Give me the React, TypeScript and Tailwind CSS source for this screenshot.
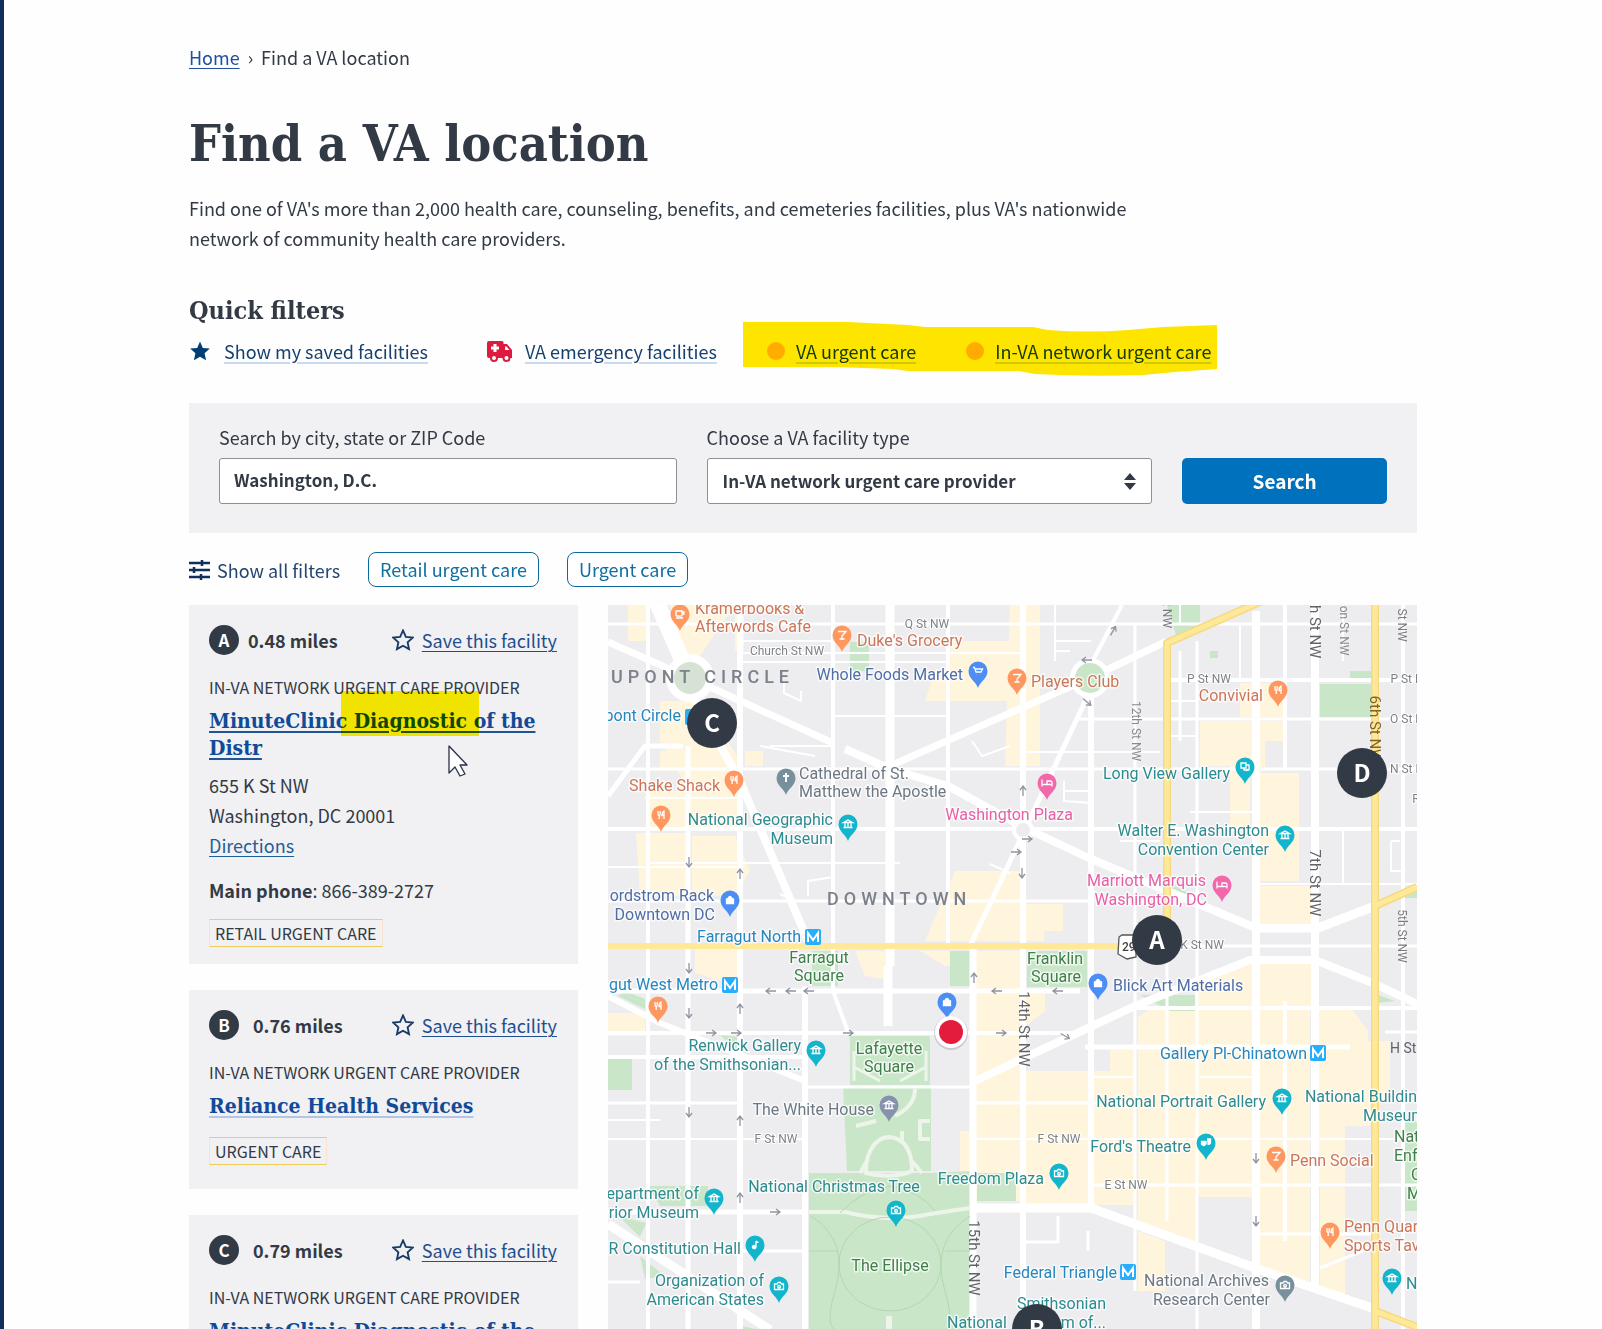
import React from "react";

const SANS = "font-['Noto_Sans_CJK_JP','Noto_Sans',sans-serif]";
const SLAB = "font-['DejaVu_Serif_Condensed','DejaVu_Serif',serif]";

type Facility = {
  letter: string;
  miles: string;
  name: string;
  address?: string[];
  phone?: string;
  tag: string;
  underline: string;
};

const facilities: Facility[] = [
  {
    letter: "A",
    miles: "0.48 miles",
    name: "MinuteClinic Diagnostic of the Distr",
    address: ["655 K St NW", "Washington, DC 20001"],
    phone: "866-389-2727",
    tag: "RETAIL URGENT CARE",
    underline: "decoration-[#205493]",
  },
  {
    letter: "B",
    miles: "0.76 miles",
    name: "Reliance Health Services",
    tag: "URGENT CARE",
    underline: "decoration-[#b5c7e0]",
  },
  {
    letter: "C",
    miles: "0.79 miles",
    name: "MinuteClinic Diagnostic of the Distr",
    address: ["1275 Pennsylvania Ave NW", "Washington, DC 20004"],
    phone: "866-389-2727",
    tag: "RETAIL URGENT CARE",
    underline: "decoration-[#205493]",
  },
];

const STAR = "M12 1.6l3.1 7 7.6.8-5.7 5.1 1.6 7.5L12 18.2 5.4 22 7 14.5 1.3 9.4l7.6-.8z";

function FacilityCard({ f }: { f: Facility }) {
  return (
    <article className="relative bg-[#f1f0f3] px-5 pt-5 pb-[17px]">
      <div className="flex items-center">
        <span className="flex size-[30px] items-center justify-center rounded-full bg-[#323a45] text-[17px] leading-[30px] font-bold text-white">
          {f.letter}
        </span>
        <span className={(f.letter === "A" ? "ml-[9px]" : "ml-[14px]") + " text-[18px] leading-[30px] font-bold"}>
          {f.miles}
        </span>
        <button type="button" className="mr-px ml-auto flex items-center gap-2 text-[#1f4f8f]">
          <svg viewBox="0 0 24 24" className="size-[22px]" fill="none" stroke="#163b66" strokeWidth="2" aria-hidden="true">
            <path d={STAR} />
          </svg>
          <span className="text-[18px] leading-[30px] underline decoration-1 underline-offset-3">Save this facility</span>
        </button>
      </div>
      <p className="mt-5 text-[16px] leading-6">IN-VA NETWORK URGENT CARE PROVIDER</p>
      <h3 className={SLAB + " mt-2 text-[21px] leading-[27px] font-bold"}>
        <a href="#facility" className={"text-[#0f4b97] underline decoration-2 underline-offset-3 " + f.underline}>
          {f.name}
        </a>
      </h3>
      {f.address && (
        <div className="mt-[9px] text-[18px] leading-[30px]">
          {f.address.map((line) => (
            <p key={line}>{line}</p>
          ))}
          <a href="#directions" className="text-[#1f5f99] underline decoration-1 underline-offset-3">
            Directions
          </a>
        </div>
      )}
      {f.phone && (
        <p className="mt-[15px] text-[18px] leading-[30px]">
          <b>Main phone</b>: {f.phone}
        </p>
      )}
      <span
        className={
          (f.phone ? "mt-[14px]" : "mt-[18px] mb-[7px]") +
          " inline-block border border-x-[#f6e3cf] border-y-[#efcf5a] px-[5px] text-[16px] leading-[26px]"
        }
      >
        {f.tag}
      </span>
      {f.letter === "A" && (
        <>
          <div className="absolute top-[86px] left-[152px] h-[45px] w-[138px] bg-[#fff200] mix-blend-multiply" />
          <svg viewBox="0 0 20 32" className="absolute top-[140px] left-[259px] h-8 w-5" aria-hidden="true">
            <path d="M1 1v27l6-6 5 9 5-2-5-9h7z" fill="#fff" stroke="#2b2f4a" strokeWidth="1.3" strokeLinejoin="round" />
          </svg>
        </>
      )}
    </article>
  );
}

/* ---------- Map ---------- */

const roads: [string, number][] = [
  ["M648 604V1329", 4],
  ["M688 745V1329", 5],
  ["M740 604V1329", 6],
  ["M833 604V990L848 1031", 4],
  ["M890 604V965M888 965V1025", 9],
  ["M948 604V945", 4],
  ["M805 985V1329", 6],
  ["M973 945V1329", 7],
  ["M1023 604V1329", 6],
  ["M1091 690V1205", 6],
  ["M1135 623V1290", 3],
  ["M1167 920V1220", 3],
  ["M1180 650V740M1197 640V1329", 3],
  ["M1256 610V1329", 8],
  ["M1285 604V768M1285 1000V1240", 4],
  ["M1315 604V1290", 8],
  ["M1343 604V660M1343 830V883", 2],
  ["M1403 604V1329", 4],
  ["M608 623H1417", 3],
  ["M740 652H1023M740 640H833M740 661H948", 2],
  ["M833 715H950M1167 700H1197", 2],
  ["M608 768H1417", 3],
  ["M645 797H740M833 745H770", 2],
  ["M608 828H1417", 4],
  ["M648 862H900M608 866H740M990 863L1010 872", 2],
  ["M608 900H1091", 3],
  ["M1115 945H1417", 3],
  ["M1167 679H1417", 4],
  ["M1075 718H1417", 3],
  ["M1023 751H1160M1170 735H1197M1190 811H1256M1256 883H1417", 2],
  ["M608 990H1080", 5],
  ["M608 1032H1080", 4],
  ["M608 1056H805", 4],
  ["M805 1086H975", 3],
  ["M608 1102H740M975 1102H1135", 3],
  ["M608 1119H660M608 1138H805M975 1138H1417", 2],
  ["M608 1211H805", 5],
  ["M688 1250H805M608 1281H640", 3],
  ["M1135 1007H1417", 4],
  ["M1385 1031H1417", 3],
  ["M1085 1046H1350", 5],
  ["M1091 1076H1135M1200 1076H1256", 2],
  ["M1091 1184H1417", 3],
  ["M1256 1233H1375M1320 1267L1375 1245", 3],
  ["M973 1207H1091L1258 1268L1375 1308", 9],
  ["M652 590L690 677", 16],
  ["M690 690L740 780L808 940", 8],
  ["M608 641L690 677L833 742", 7],
  ["M845 748L890 768L948 785L1023 826L1091 858L1256 927", 8],
  ["M1256 927H1318L1375 905", 9],
  ["M890 765L1010 712L1090 677L1167 640", 7],
  ["M1090 690L1022 835L970 945", 5],
  ["M1090 665L1122 604", 4],
  ["M608 795L645 745H683", 5],
  ["M975 1080L1135 1005L1250 959H1315L1375 983L1417 1003", 8],
  ["M608 1223L770 1329", 9],
  ["M608 995L660 1022L805 1080", 6],
  ["M1023 1241H1058V1215M1088 1230V1250", 3],
  ["M784 680V692L801 700V690M760 745L815 755M780 893L795 900M808 895V880L833 876", 2],
  ["M972 740L982 755L1010 745", 2],
  ["M1055 640H1091M1055 604V660M1055 650H1070M1064 790H1091M1064 780V800L1091 802", 2],
  ["M1160 840H1120M1391 840H1400M1391 840V870H1403M1180 604V623M1240 625V679", 2],
];

const beige = [
  "M670 604H735L700 655H680z",
  "M735 613H744V650H735z",
  "M628 604H648V640H628z",
  "M660 700H700L738 756V830H648V790H690L660 740z",
  "M660 750H690V770H660z",
  "M636 832H688V895H640z",
  "M692 835H735L750 870L735 895H692z",
  "M745 750H763V765H745z",
  "M945 640H1022V700H925L935 670H948z",
  "M1010 604H1040V765H1005z",
  "M955 870H1020V940H925z",
  "M1026 903H1063V930H1026zM1026 925H1044V940H1026z",
  "M1200 720H1285V740H1265V770H1250V828H1230V765H1200z",
  "M1240 682H1285V716H1240z",
  "M1260 772H1299V880H1260zM1258 885H1312V922H1258z",
  "M695 945H738V985L695 972z",
  "M855 950H885V978L865 975z",
  "M920 950H970V965H945z",
  "M976 950H1022V1200H960V1130H973z",
  "M608 1012H645V1035H608z",
  "M1026 1070H1135V1204H1026z",
  "M1026 990H1045V1010L1026 1025z",
  "M1110 1048H1136V1075H1110z",
  "M1138 1016L1150 1008H1310V1195H1138z",
  "M1195 985L1250 962H1313V1005H1195z",
  "M1318 1008H1352L1368 1030V1040H1390V1100H1371V1125H1345V1183H1318z",
  "M1138 1186H1197V1250L1138 1222z",
  "M1200 1186H1310V1290L1256 1265V1196H1200z",
  "M1320 1186H1345V1300L1320 1290z",
  "M1138 1230L1165 1240V1290H1138z",
];

const green = [
  "M850 641H869V670H850z",
  "M1167 604H1200V625L1176 634z",
  "M1320 683H1371V716H1320z",
  "M1350 670H1371V677H1350z",
  "M812 950H838V985H812z",
  "M950 950H971V985H950z",
  "M1027 950H1087V986H1027z",
  "M625 990L645 998V1008L618 995z",
  "M608 1058H632V1089H608z",
  "M720 1034L738 1036V1050z",
  "M850 1035H930V1084H850z",
  "M843 1086H931V1170H847z",
  "M809 1172H932L970 1170V1329H809z",
  "M977 1172H1016V1200H977z",
  "M648 1185H708V1205H660z",
  "M618 1215L646 1222L640 1236z",
  "M640 1255L665 1275L645 1278z",
  "M1140 994H1195V1010H1170z",
  "M1378 994L1395 1000L1378 1002z",
  "M1405 1120H1417V1210H1405z",
  "M1165 880L1195 895L1170 890z",
  "M1210 650h8v7h-8z",
  "M1403 890L1417 884V897H1403z",
  "M742 1325L760 1329H742z",
];

const C = {
  orange: "#ff9860",
  blue: "#4c8df6",
  teal: "#12b5cb",
  pink: "#f268ab",
  slate: "#78909c",
};

const glyph: Record<string, React.ReactNode> = {
  fork: <path d="M-3-4v3q0 1.5 1.2 1.5V4M-.8-4v3q0 1.5-1.2 1.5M3 4V-4Q1-3 1 .5H3" />,
  cup: <path d="M-4-3H2V1q0 1-1 1h-4q-1 0-1-1zM2-2h2V0H2M-4 4H3" />,
  drink: <path d="M-4-3.5H4L0 1V4M-2.500 4H2.500" />,
  cart: <path d="M-5-3.500h1.500L-2 1H3L4.500-2H-2.500M-1.500 3.500h.1M2.500 3.500h.1" />,
  bag: <path d="M-3.500-1H3.500V3.500h-7zM-1.800-1v-1Q0-5 1.800-2v1" fill="#fff" />,
  bed: <path d="M-5-3.500V3.500M-5 1.500H5M5 3.500V-.500Q5-2 3-2H0V1.500M-2.500-.800h.1" />,
  museum: <path d="M-4.500-1.500L0-4L4.500-1.500zM-3-1V3M0-1V3M3-1V3M-4.500 3.500h9" />,
  camera: <path d="M-4.500-2H-2L-1-3.500H1.500L2.500-2H4.500V3.500h-9zM0-.6a1.300 1.300 0 1 0 .1 0" />,
  note: <path d="M1-4V2M1-4L3.500-2.500M1 2a1.800 1.600 0 1 1-.1-.5" fill="#fff" />,
  church: <path d="M0-5V4M-3-2H3" strokeWidth="2" />,
  masks: <path d="M-4.500-1.500H0V1q-2 3-4.500 0zM1-4H4.500V0Q3 2 1.500 1" fill="#fff" />,
  art: <path d="M-4-4H1V1H-4zM1-2H4V3H-1V1M1 4L3 2" />,
};

const pins: [number, number, string, string][] = [
  [680, 614, C.orange, "cup"],
  [842, 635, C.orange, "drink"],
  [978, 671, C.blue, "cart"],
  [1017, 678, C.orange, "drink"],
  [786, 778, C.slate, "church"],
  [734, 780, C.orange, "fork"],
  [661, 815, C.orange, "fork"],
  [848, 824, C.teal, "museum"],
  [730, 900, C.blue, "bag"],
  [1047, 783, C.pink, "bed"],
  [1245, 767, C.teal, "art"],
  [1278, 690, C.orange, "fork"],
  [1285, 835, C.teal, "museum"],
  [1222, 885, C.pink, "bed"],
  [658, 1006, C.orange, "fork"],
  [816, 1050, C.teal, "museum"],
  [947, 1002, C.blue, "bag"],
  [889, 1105, "#8591ad", "museum"],
  [714, 1198, C.teal, "museum"],
  [896, 1210, C.teal, "camera"],
  [755, 1245, C.teal, "note"],
  [779, 1286, C.teal, "camera"],
  [1098, 983, C.blue, "bag"],
  [1282, 1098, C.teal, "museum"],
  [1206, 1143, C.teal, "masks"],
  [1059, 1173, C.teal, "camera"],
  [1276, 1156, C.orange, "drink"],
  [1330, 1232, C.orange, "fork"],
  [1392, 1278, C.teal, "museum"],
  [1285, 1285, C.slate, "camera"],
];

const metros: [number, number][] = [
  [813, 936],
  [730, 984],
  [1318, 1052],
  [1128, 1271],
];

const T = { food: "#cc7659", shop: "#4f6ea8", museum: "#2e8b90", grey: "#6d7885", pink: "#e75fa5", park: "#3f7f49", metro: "#2487c0" };

const labels: [string, number, number, string, "start" | "middle" | "end"][] = [
  ["Kramerbooks &", 695, 613, T.food, "start"],
  ["Afterwords Cafe", 695, 631, T.food, "start"],
  ["Duke's Grocery", 857, 645, T.food, "start"],
  ["Whole Foods Market", 963, 679, T.shop, "end"],
  ["Players Club", 1031, 686, T.food, "start"],
  ["Convivial", 1263, 700, T.food, "end"],
  ["pont Circle", 681, 720, T.metro, "end"],
  ["Shake Shack", 720, 790, T.food, "end"],
  ["Cathedral of St.", 799, 778, T.grey, "start"],
  ["Matthew the Apostle", 799, 796, T.grey, "start"],
  ["National Geographic", 833, 824, T.museum, "end"],
  ["Museum", 833, 843, T.museum, "end"],
  ["Washington Plaza", 1073, 819, T.pink, "end"],
  ["Long View Gallery", 1230, 778, T.museum, "end"],
  ["Walter E. Washington", 1269, 835, T.museum, "end"],
  ["Convention Center", 1269, 854, T.museum, "end"],
  ["Marriott Marquis", 1206, 885, T.pink, "end"],
  ["Washington, DC", 1207, 904, T.pink, "end"],
  ["ordstrom Rack", 714, 900, T.shop, "end"],
  ["Downtown DC", 715, 919, T.shop, "end"],
  ["Farragut North", 801, 941, T.metro, "end"],
  ["Farragut", 819, 962, T.park, "middle"],
  ["Square", 819, 980, T.park, "middle"],
  ["gut West Metro", 718, 989, T.metro, "end"],
  ["Franklin", 1055, 963, T.park, "middle"],
  ["Square", 1056, 981, T.park, "middle"],
  ["Blick Art Materials", 1113, 990, T.shop, "start"],
  ["Renwick Gallery", 801, 1050, T.museum, "end"],
  ["of the Smithsonian...", 801, 1069, T.museum, "end"],
  ["Lafayette", 889, 1053, T.park, "middle"],
  ["Square", 889, 1071, T.park, "middle"],
  ["The White House", 874, 1114, T.grey, "end"],
  ["Gallery Pl-Chinatown", 1307, 1058, T.metro, "end"],
  ["National Portrait Gallery", 1266, 1106, T.museum, "end"],
  ["National Buildin", 1417, 1101, T.museum, "end"],
  ["Museum", 1363, 1120, T.museum, "start"],
  ["Ford's Theatre", 1191, 1151, T.museum, "end"],
  ["Penn Social", 1290, 1165, T.food, "start"],
  ["Nat", 1394, 1141, T.park, "start"],
  ["Enfo", 1394, 1160, T.park, "start"],
  ["Of", 1411, 1179, T.park, "start"],
  ["Me", 1407, 1198, T.park, "start"],
  ["Freedom Plaza", 1044, 1183, T.museum, "end"],
  ["National Christmas Tree", 834, 1191, T.museum, "middle"],
  ["epartment of", 699, 1198, T.museum, "end"],
  ["rior Museum", 699, 1217, T.museum, "end"],
  ["R Constitution Hall", 741, 1253, T.museum, "end"],
  ["The Ellipse", 890, 1270, T.park, "middle"],
  ["Organization of", 764, 1285, T.museum, "end"],
  ["American States", 764, 1304, T.museum, "end"],
  ["Federal Triangle", 1117, 1277, T.metro, "end"],
  ["National Archives", 1269, 1285, T.grey, "end"],
  ["Research Center", 1270, 1304, T.grey, "end"],
  ["Smithsonian", 1106, 1308, T.museum, "end"],
  ["National", 947, 1327, T.museum, "start"],
  ["m of...", 1106, 1327, T.museum, "end"],
  ["Penn Quarter", 1344, 1231, T.food, "start"],
  ["Sports Tavern", 1344, 1250, T.food, "start"],
  ["N", 1406, 1288, T.museum, "start"],
];

const streets: [string, number, number][] = [
  ["Q St NW", 927, 627],
  ["Church St NW", 787, 654],
  ["P St NW", 1209, 682],
  ["P St N", 1407, 682],
  ["O St N", 1407, 722],
  ["N St N", 1407, 772],
  ["R", 1416, 802],
  ["K St NW", 1202, 948],
  ["F St NW", 776, 1142],
  ["F St NW", 1059, 1142],
  ["E St NW", 1126, 1188],
];

const vstreets: [string, number, number, number, string][] = [
  ["t NW", 1163, 614, 12, "#777b80"],
  ["12th St NW", 1132, 730, 12, "#85898e"],
  ["8th St NW", 1310, 624, 15, "#5f6368"],
  ["7th St NW", 1310, 882, 15, "#5f6368"],
  ["rion St NW", 1340, 626, 12, "#85898e"],
  ["6th St NW", 1370, 728, 15, "#7a6427"],
  ["5th St NW", 1398, 614, 12, "#777b80"],
  ["5th St NW", 1398, 935, 12, "#777b80"],
  ["14th St NW", 1019, 1028, 15, "#5f6368"],
  ["15th St NW", 969, 1257, 15, "#5f6368"],
];

const arrows: [number, number, number][] = [
  [689, 861, 90], [740, 873, -90], [689, 967, 90], [689, 1012, 90], [740, 1008, -90],
  [771, 990, 180], [791, 990, 180], [809, 990, 180], [974, 977, -90], [997, 990, 180],
  [711, 1032, 0], [736, 1032, 0], [848, 1032, 0], [1001, 1032, 0], [689, 1111, 90],
  [740, 1120, -90], [740, 1197, -90], [775, 1211, 0], [1256, 1157, 90], [1256, 1220, 90],
  [1058, 990, 180], [1023, 790, -90], [1022, 872, 90], [1016, 851, 0], [1113, 630, -60],
  [1087, 659, 180], [1087, 701, 40], [1027, 838, 0], [1065, 1035, 30],
];

const markers: [string, number, number][] = [
  ["C", 712, 722],
  ["D", 1362, 772],
  ["A", 1157, 939],
  ["B", 1037, 1328],
];

function FacilityMap() {
  return (
    <svg
      viewBox="608 604 809 725"
      preserveAspectRatio="xMinYMin slice"
      className="block h-full w-full font-[Roboto,sans-serif]"
      role="img"
      aria-label="Map of facilities near Washington, D.C."
    >
      <rect x="608" y="604" width="1200" height="1200" fill="#ededf0" />
      <g fill="#fff4dc">{beige.map((d) => <path key={d} d={d} />)}</g>
      <g fill="#c9e7c8">{green.map((d) => <path key={d} d={d} />)}</g>
      <g stroke="#fff" fill="none" strokeLinejoin="round">
        {roads.map(([d, w]) => <path key={d} d={d} strokeWidth={w} />)}
      </g>
      <g fill="none" stroke="#edf5ea" strokeWidth="4" strokeLinejoin="round">
        <path d="M856 1125L876 1120M890 1136C872 1136 865 1158 866 1172C880 1176 900 1176 912 1170C912 1150 905 1138 890 1136zM860 1172L868 1158M922 1172L910 1158M915 1088Q915 1105 895 1115M930 1120H920V1138H930M902 1130V1140" />
        <path d="M854 1050V1080M926 1050V1080M854 1066L880 1080M926 1066L900 1080" strokeWidth="3" />
        <path d="M809 1211H845Q890 1222 930 1213L970 1207" />
        <path d="M889 1315V1329" strokeWidth="6" />
      </g>
      <g fill="none" stroke="#b3d6b0" strokeWidth="1">
        <ellipse cx="890" cy="1263" rx="51" ry="47" />
        <path d="M811 1215Q850 1240 835 1290T850 1329M970 1215Q930 1240 945 1290T930 1329M840 1212Q860 1190 890 1185Q920 1190 935 1210M809 1250H838M945 1250H970" />
      </g>
      <circle cx="690" cy="677" r="24" fill="#fff" />
      <circle cx="690" cy="677" r="16" fill="#d6e2d3" />
      <circle cx="1090" cy="677" r="20" fill="#fff" />
      <circle cx="1090" cy="677" r="15" fill="#c9e7c8" />
      <circle cx="1023" cy="829" r="9" fill="#ededf0" stroke="#fff" strokeWidth="4" />
      <g fill="none" stroke="#f6d980" strokeLinejoin="round">
        <path d="M1167 920V642L1262 600M1375 600V1333M1375 905L1417 886M1375 1310L1417 1326" strokeWidth="8" />
      </g>
      <g fill="none" stroke="#ffe999" strokeLinejoin="round">
        <path d="M1167 920V642L1262 600M1375 600V1333M1375 905L1417 886M1375 1310L1417 1326" strokeWidth="5" />
        <path d="M608 945H1120" strokeWidth="6" />
      </g>
      <g fill="none" stroke="#9094a0" strokeWidth="1.300">
        {arrows.map(([x, y, r]) => (
          <path key={x + "-" + y} d="M-5 0H5M1-3L5 0L1 3" transform={`translate(${x} ${y}) rotate(${r})`} />
        ))}
      </g>

      <g fontSize="12" fill="#7d8187" textAnchor="middle" stroke="#fff" strokeWidth="2" paintOrder="stroke">
        {streets.map(([t, x, y]) => <text key={t + x + y} x={x} y={y}>{t}</text>)}
      </g>
      <text x="1390" y="1052" fontSize="14" fill="#5f6368">H St</text>
      <g textAnchor="middle">
        {vstreets.map(([t, x, y, s, c]) => (
          <text key={t + x + y} fontSize={s} fill={c} transform={`translate(${x} ${y}) rotate(90)`}>{t}</text>
        ))}
      </g>
      <g fontSize="18" fontWeight="500" fill="#7c808b" className="tracking-[5px]">
        <text x="611" y="682">UPONT CIRCLE</text>
        <text x="827" y="904">DOWNTOWN</text>
      </g>

      <g fontSize="16" stroke="#fff" strokeOpacity="0.7" strokeWidth="3" paintOrder="stroke" strokeLinejoin="round">
        {labels.map(([t, x, y, c, a]) => (
          <text key={t + x + y} x={x} y={y} fill={c} textAnchor={a}>{t}</text>
        ))}
      </g>

      <rect x="685" y="708" width="16" height="16" rx="2" fill="#27aefc" />
      {metros.map(([x, y]) => (
        <g key={x}>
          <rect x={x - 8} y={y - 8} width="16" height="16" rx="2" fill="#27aefc" />
          <path d={`M${x - 5} ${y + 5}V${y - 4}L${x} ${y + 3}L${x + 5} ${y - 4}V${y + 5}`} fill="none" stroke="#fff" strokeWidth="2" />
        </g>
      ))}
      {pins.map(([x, y, c, g]) => (
        <g key={x + "-" + y} transform={`translate(${x} ${y})`}>
          <path d="M0 16C-1.500 10-9.500 7-9.500-1A9.500 9.500 0 1 1 9.500-1C9.500 7 1.500 10 0 16z" fill={c} />
          <g transform="translate(0 -1)" fill="none" stroke="#fff" strokeWidth="1.300">{glyph[g]}</g>
        </g>
      ))}

      <path d="M1119 936L1122 934H1136V956L1127 958L1118 953z" fill="#fff" stroke="#555" strokeWidth="1.300" />
      <text x="1122" y="950" fontSize="12" fontWeight="500" fill="#444">29</text>

      <circle cx="951" cy="1032" r="17" fill="#8a8a94" opacity="0.35" />
      <circle cx="951" cy="1031" r="16" fill="#fff" />
      <circle cx="951" cy="1031" r="12" fill="#e31c3d" />

      {markers.map(([l, x, y]) => (
        <g key={l}>
          <circle cx={x} cy={y} r="25" fill="#323a45" />
          <text x={x} y={y + 9} textAnchor="middle" fontSize="24" fontWeight="700" fill="#fff" className={SANS}>
            {l}
          </text>
        </g>
      ))}
    </svg>
  );
}

const chip = "h-[35px] rounded-lg border border-[#0e6a9c] bg-white px-[11px] text-[18px] leading-[33px] text-[#0e6fa0]";
const quickLink = "underline decoration-2 underline-offset-3";

export default function App() {
  return (
    <div className={SANS + " h-screen overflow-hidden border-l-4 border-[#112f5c] bg-[#fefefe] text-[#323a45]"}>
      <main className="mx-auto flex h-full max-w-[1228px] flex-col">
        <nav aria-label="Breadcrumb" className="mt-[42px] flex gap-2 text-[18px] leading-[30px]">
          <a href="#home" className="text-[#1f4f9f] underline decoration-1 underline-offset-3">Home</a>
          <span aria-hidden="true">›</span>
          <span>Find a VA location</span>
        </nav>

        <h1 className={SLAB + " mt-10 text-[50px] leading-[64px] font-bold"}>Find a VA location</h1>
        <p className="mt-[17px] max-w-[960px] text-[18px] leading-[30px]">
          Find one of VA's more than 2,000 health care, counseling, benefits, and cemeteries facilities, plus VA's
          nationwide network of community health care providers.
        </p>

        <h2 className={SLAB + " mt-[42px] text-[25px] leading-[32px] font-bold"}>Quick filters</h2>
        <div className="relative mt-[9px] flex items-center text-[18px] leading-[30px] text-[#16406f]">
          <a href="#saved" className="flex items-center gap-[13px]">
            <svg viewBox="0 0 24 24" className="size-[22px]" fill="#003e73" aria-hidden="true">
              <path d={STAR} />
            </svg>
            <span className={quickLink + " decoration-[#c9d9ef]"}>Show my saved facilities</span>
          </a>
          <a href="#emergency" className="ml-[59px] flex items-center gap-3">
            <svg viewBox="0 0 26 21" className="h-[21px] w-[26px]" aria-hidden="true">
              <path d="M2 0H15Q16.500 0 16.500 1.500V3H20L25 9V17H2Q0 17 0 15V2Q0 0 2 0z" fill="#dc1b3f" />
              <path d="M8 3V11M4 7H12" stroke="#fff" strokeWidth="3" />
              <path d="M18 5.500H19.500L22.500 9H18z" fill="#fff" />
              <circle cx="7" cy="17" r="3" fill="#fff" stroke="#dc1b3f" strokeWidth="2" />
              <circle cx="19.500" cy="17" r="3" fill="#fff" stroke="#dc1b3f" strokeWidth="2" />
            </svg>
            <span className={quickLink + " decoration-[#c9d9ef]"}>VA emergency facilities</span>
          </a>
          <a href="#urgent" className="ml-[50px] flex items-center gap-[11px]">
            <span className="size-[18px] rounded-full bg-[#ffbe2e]" />
            <span className={quickLink + " decoration-[#d0e0ef]"}>VA urgent care</span>
          </a>
          <a href="#network" className="ml-[50px] flex items-center gap-[11px]">
            <span className="size-[18px] rounded-full bg-[#ffbe2e]" />
            <span className={quickLink + " decoration-[#d0e0ef]"}>In-VA network urgent care</span>
          </a>
          <svg viewBox="0 0 474 54" className="absolute top-[-14px] left-[554px] h-[54px] w-[474px] mix-blend-multiply" aria-hidden="true">
            <path d="M0 0H105L165 3L182 5H290L305 8Q345 11 385 8L420 5L474 3V47L432 50L400 53Q345 55 292 52L275 49H165L150 47L90 45H0z" fill="#ffe600" />
          </svg>
        </div>

        <form
          className="mt-[37px] grid grid-cols-[458fr_446fr_205fr] items-end gap-x-[30px] bg-[#f1f0f3] px-[30px] pt-[19px] pb-[29px]"
          onSubmit={(e) => e.preventDefault()}
        >
          <div>
            <label htmlFor="place" className="block text-[18px] leading-[30px]">Search by city, state or ZIP Code</label>
            <input
              id="place"
              defaultValue="Washington, D.C."
              className="mt-[6px] block h-[46px] w-full rounded-[3px] border border-[#8d9099] bg-white px-[14px] pb-[3px] text-[17px] leading-[30px] font-bold"
            />
          </div>
          <div>
            <label htmlFor="kind" className="block text-[18px] leading-[30px]">Choose a VA facility type</label>
            <div className="relative mt-[6px]">
              <select
                id="kind"
                className="block h-[46px] w-full appearance-none rounded-[3px] border border-[#8d9099] bg-white px-[15px] text-[17px] leading-[30px] font-bold"
              >
                <option>In-VA network urgent care provider</option>
                <option>VA urgent care</option>
              </select>
              <svg viewBox="0 0 12 17" className="pointer-events-none absolute top-[15px] right-[16px] h-[17px] w-3" fill="#323a45" aria-hidden="true">
                <path d="M6 0l6 7H0zM6 17l6-7H0z" />
              </svg>
            </div>
          </div>
          <button type="submit" className="h-[46px] rounded-[5px] bg-[#0071bc] text-[19px] leading-[30px] font-bold text-white">
            Search
          </button>
        </form>

        <div className="mt-[19px] flex items-center">
          <button type="button" className="flex items-center gap-[7px] text-[18px] leading-[30px] text-[#24466f]">
            <svg viewBox="0 0 21 20" className="h-5 w-[21px]" stroke="#112f5c" strokeWidth="2.500" aria-hidden="true">
              <path d="M0 3H21M0 10H21M0 17H21" />
              <path d="M13 0V6M5 7V13M12 14V20" />
            </svg>
            Show all filters
          </button>
          <button type="button" className={chip + " ml-7"}>Retail urgent care</button>
          <button type="button" className={chip + " ml-7"}>Urgent care</button>
        </div>

        <div className="mt-[18px] grid min-h-0 flex-1 grid-cols-[389fr_809fr] gap-[30px]">
          <div className="flex min-h-0 flex-col gap-[26px]">
            {facilities.map((f) => (
              <FacilityCard key={f.letter} f={f} />
            ))}
          </div>
          <div className="min-h-0 overflow-hidden">
            <FacilityMap />
          </div>
        </div>
      </main>
    </div>
  );
}
